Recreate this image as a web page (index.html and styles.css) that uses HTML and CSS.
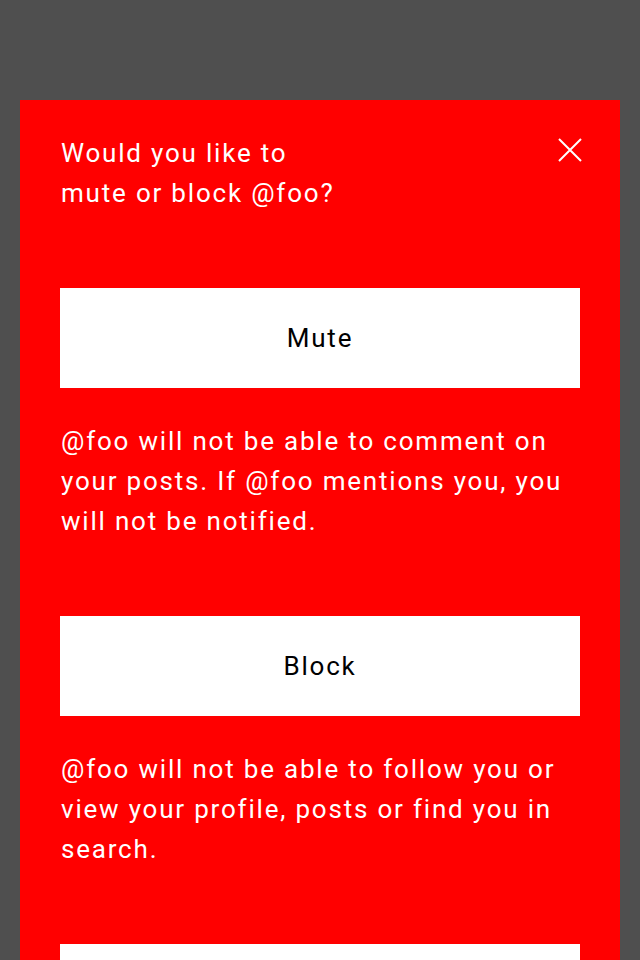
FILE: index.html
```html
<!DOCTYPE html>
<html lang="en">
<head>
<meta charset="utf-8">
<title>Mute or block</title>
<link rel="stylesheet" href="styles.css">
</head>
<body>
<div class="modal">
  <button class="close" aria-label="Close">
    <svg width="24" height="24" viewBox="0 0 24 24"><path d="M1 1L23 23M23 1L1 23" stroke="#fff" stroke-width="2" fill="none"/></svg>
  </button>
  <h1 class="title">Would you like to<br>mute or block @foo?</h1>
  <button class="action">Mute</button>
  <p class="desc">@foo will not be able to comment on your posts. If @foo mentions you, you will not be notified.</p>
  <button class="action">Block</button>
  <p class="desc">@foo will not be able to follow you or view your profile, posts or find you in search.</p>
  <button class="action">Mute and block</button>
</div>
</body>
</html>
```
FILE: styles.css
```css
html, body {
  margin: 0;
  padding: 0;
  background: #4f4f4f;
  height: 100%;
  overflow: hidden;
}
body {
  font-family: Roboto, "Liberation Sans", sans-serif;
  letter-spacing: 1.8px;
  padding: 100px 20px 0;
}
.modal {
  position: relative;
  background: #ff0000;
  color: #fff;
  padding: 33px 40px 40px;
  display: flex;
  flex-direction: column;
  min-height: 900px;
}
.close {
  position: absolute;
  top: 38px;
  right: 38px;
  width: 24px;
  height: 24px;
  padding: 0;
  border: 0;
  background: none;
  cursor: pointer;
}
.close svg { display: block; }
.title {
  margin: 0 0 0 1px;
  font-size: 26px;
  font-weight: 400;
  line-height: 40px;
}
.action {
  margin-top: 75px;
  height: 100px;
  border: 0;
  background: #fff;
  color: #000;
  font-family: inherit;
  letter-spacing: inherit;
  font-size: 26px;
  padding: 0;
}
.desc {
  margin: 33px 0 0 1px;
  font-size: 26px;
  line-height: 40px;
}
```
